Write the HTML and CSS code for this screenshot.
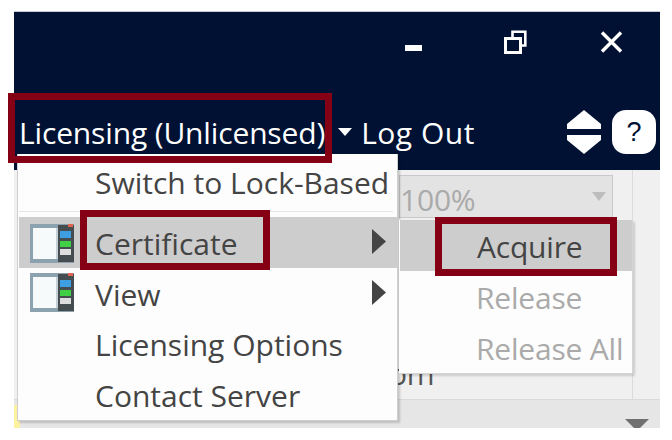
FILE: index.html
```html
<!DOCTYPE html>
<html lang="en">
<head>
<meta charset="utf-8">
<title>Licensing menu</title>
<link rel="stylesheet" href="styles.css">
</head>
<body>
<svg class="defs" width="0" height="0">
  <defs>
    <g id="panel">
      <rect x="0" y="0" width="44" height="39" fill="#8ca3af"/>
      <rect x="3" y="4" width="23" height="31" fill="#f7fafb"/>
      <rect x="26" y="4" width="2" height="31" fill="#c4d0d6"/>
      <rect x="28" y="1" width="16" height="37" fill="#464d50"/>
      <rect x="30" y="7" width="11" height="7" fill="#3d9fe2"/>
      <rect x="30" y="17" width="11" height="6" fill="#3fd045"/>
      <rect x="30" y="25" width="11" height="6" fill="#dddddd"/>
      <rect x="38" y="0" width="5" height="3" fill="#e2654f"/>
    </g>
  </defs>
</svg>
<div class="window">
  <header class="header">
    <div class="titlebar">
      <svg class="ctl ctl-min" width="17" height="8" viewBox="0 0 17 8"><rect y="1" width="17" height="6" fill="#fff"/></svg>
      <svg class="ctl ctl-restore" width="23" height="24" viewBox="0 0 23 24"><path d="M8.5 7V1.7H21.3V15.5H17" fill="none" stroke="#fff" stroke-width="2.6"/><rect x="1.5" y="8.5" width="15" height="14" fill="none" stroke="#fff" stroke-width="3"/></svg>
      <svg class="ctl ctl-close" width="23" height="22" viewBox="0 0 23 22"><path d="M2 1.5L21 20.5M21 1.5L2 20.5" stroke="#fff" stroke-width="3.4"/></svg>
    </div>
    <div class="toolbar">
      <span class="tool-label">Licensing (Unlicensed)</span>
      <span class="caret-cell"><svg width="14" height="8" viewBox="0 0 14 8"><path d="M0 0H14L7 8Z" fill="#fff"/></svg></span>
      <span class="tool-label tool-logout">Log Out</span>
      <svg class="updown" width="34" height="44" viewBox="0 0 34 44"><path d="M17 0L34 14V19H0V14Z M17 44L34 30V25H0V30Z" fill="#fff"/></svg>
      <span class="help">?</span>
    </div>
  </header>
  <main class="content">
    <div class="content-col">
      <div class="combo"><span class="combo-value">100%</span><svg width="14" height="9" viewBox="0 0 14 9"><path d="M0 0H14L7 9Z" fill="#bdbdbd"/></svg></div>
      <div class="fragment">om</div>
    </div>
  </main>
  <footer class="footer">
    <span class="swatch"></span>
    <svg class="footer-arrow" width="24" height="9" viewBox="0 0 24 9"><path d="M0 0H24L15 9H9Z" fill="#707070"/></svg>
  </footer>
</div>

<nav class="menu">
  <div class="item item-first">Switch to Lock-Based</div>
  <div class="item item-on">
    <svg class="icon" width="44" height="39" viewBox="0 0 44 39"><use href="#panel"/></svg>
    <span class="item-text-low">Certificate</span>
    <svg class="chev" width="14" height="25" viewBox="0 0 14 25"><path d="M0 0L14 12.5L0 25Z" fill="#444"/></svg>
  </div>
  <div class="item">
    <svg class="icon icon-view" width="44" height="39" viewBox="0 0 44 39"><use href="#panel"/></svg>
    <span class="item-text-low">View</span>
    <svg class="chev" width="14" height="25" viewBox="0 0 14 25"><path d="M0 0L14 12.5L0 25Z" fill="#444"/></svg>
  </div>
  <div class="item">Licensing Options</div>
  <div class="item">Contact Server</div>
</nav>

<nav class="submenu">
  <div class="sub-item sub-on">Acquire</div>
  <div class="sub-item sub-off">Release</div>
  <div class="sub-item sub-off">Release All</div>
</nav>

<div class="mark mark-licensing"></div>
<div class="mark mark-certificate"></div>
<div class="mark mark-acquire"></div>
</body>
</html>
```
FILE: styles.css
```css
* { box-sizing: border-box; }
html, body { margin: 0; padding: 0; background: #fff; }
body {
  width: 672px;
  height: 440px;
  position: relative;
  overflow: hidden;
  font-family: "Open Sans", "Noto Sans", sans-serif;
  padding: 11px 12px 12px 14px;
}
.defs { position: absolute; }
.window { height: 417px; display: flex; flex-direction: column; background: #f0f0f0; }

.header { height: 159px; background: #001133; display: flex; flex-direction: column; border-top: 1px solid #c9ccd4; }
.titlebar { height: 82px; display: flex; }
.ctl { flex: none; }
.ctl-min { margin: 32px 0 0 391px; }
.ctl-restore { margin: 18px 0 0 82px; }
.ctl-close { margin: 19px 0 0 73px; }

.toolbar { flex: 1; display: flex; align-items: center; padding: 0 4px 0 5px; }
.tool-label { color: #fff; font-size: 30px; line-height: 40px; letter-spacing: -0.15px; margin-top: 2px; white-space: nowrap; }
.tool-logout { letter-spacing: 0.5px; margin-left: 3px; }
.caret-cell { width: 33px; padding-left: 13px; display: flex; margin-bottom: 1px; }
.updown { margin-left: auto; margin-top: -1px; }
.help {
  width: 44px; height: 44px; margin: -1px 0 0 11px;
  background: #fff; border-radius: 14px;
  color: #001133; font: 27px/44px "Liberation Sans", sans-serif; text-align: center;
}

.content { flex: 1; display: flex; justify-content: flex-end; padding-right: 27px; }
.content-col { width: 234px; border-right: 1px solid #dcdcdc; padding: 5px 19px 0 0; font-size: 30px; }
.combo {
  height: 43px; background: #e3e3e3; border: 1px solid #c8c8c8;
  display: flex; align-items: center; justify-content: space-between; padding: 0 6px 0 0;
  color: #aaa; letter-spacing: -0.2px;
}
.combo-value { margin-top: 6px; }
.fragment { margin: 141px 0 0 -10px; color: #555; line-height: 30px; letter-spacing: -0.2px; }

.footer {
  height: 29px; background: #e6e6e6; border-top: 1px solid #dadada;
  display: flex; justify-content: space-between; align-items: flex-end;
  padding-right: 11px;
}
.swatch { width: 6px; height: 23px; background: #fdf2a0; }
.footer-arrow { display: block; }

.menu {
  position: absolute; left: 17px; top: 154px; width: 381px; height: 267px;
  background: #fdfdfd; border: 1px solid #cfcfcf; border-top: 0;
  box-shadow: 2px 2px 2px rgba(0,0,0,.18);
  color: #444; font-size: 30px; letter-spacing: 0;
}
.item { height: 51px; display: flex; align-items: center; padding-left: 76px; position: relative; white-space: nowrap; margin-left: 1px; }
.item-first { height: 58px; margin-bottom: 5px; border-bottom: 1px solid #e4e4e4; margin-right: 4px; }
.item-on { background: #cdcdcd; }
.item-text-low { margin-top: 2px; }
.icon { position: absolute; left: 11px; top: 7px; filter: blur(.5px); }
.icon-view { top: 5px; }
.chev { position: absolute; left: 353px; top: 12px; }

.submenu {
  position: absolute; left: 399px; top: 220px; width: 234px; height: 154px;
  background: #fdfdfd; border: 1px solid #d5d5d5; border-top: 0; border-left: 0;
  box-shadow: 2px 2px 2px rgba(0,0,0,.15);
  font-size: 30px; letter-spacing: -0.2px; padding-left: 1px;
}
.sub-item { height: 51px; display: flex; align-items: center; padding: 1px 0 0 76px; white-space: nowrap; }
.sub-on { background: #cdcdcd; color: #444; padding-left: 77px; }
.sub-off { color: #aaa; }

.mark { position: absolute; border: 7px solid #850014; pointer-events: none; }
.mark-licensing { left: 8px; top: 93px; width: 324px; height: 70px; }
.mark-certificate { left: 80px; top: 210px; width: 190px; height: 60px; }
.mark-acquire { left: 435px; top: 217px; width: 182px; height: 59px; }
```
